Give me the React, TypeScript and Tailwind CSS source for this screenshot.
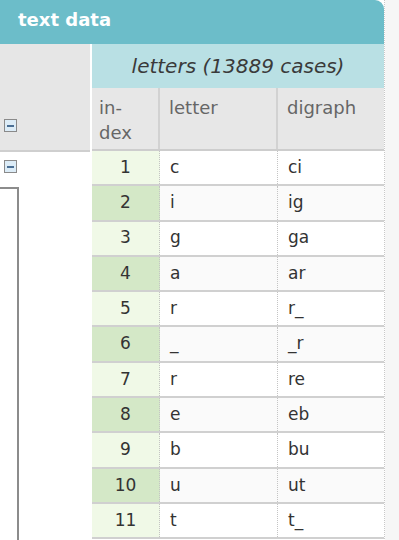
const ROWS: [number, string, string][] = [
  [1, "c", "ci"],
  [2, "i", "ig"],
  [3, "g", "ga"],
  [4, "a", "ar"],
  [5, "r", "r_"],
  [6, "_", "_r"],
  [7, "r", "re"],
  [8, "e", "eb"],
  [9, "b", "bu"],
  [10, "u", "ut"],
  [11, "t", "t_"],
];

function MinusBox() {
  return (
    <div className="flex h-[13px] w-[13px] items-center justify-center border border-[#8a8a8a] bg-[#dcecf7]">
      <div className="h-[2px] w-[7px] bg-[#4a6f95]" />
    </div>
  );
}

export default function App() {
  return (
    <div className="relative h-[540px] w-[399px] overflow-hidden bg-[#f6f6f6] font-['DejaVu_Sans',sans-serif] text-[#333]">
      <div className="w-[385px] border-r border-dotted border-[#c8c8c8] bg-white">
        <div className="flex h-[44px] items-center rounded-tr-[9px] bg-[#6cbdc9] pb-[6px] pl-[18px] text-[18px] font-bold text-white">
          text data
        </div>
        <div className="flex">
          <div className="w-[90px] shrink-0">
            <div className="flex h-[108px] items-end border-b-2 border-[#cfcfcf] bg-[#e6e6e6] pb-[18px] pl-[4px]">
              <MinusBox />
            </div>
            <div className="pl-[4px] pt-[8px]">
              <MinusBox />
            </div>
            <div className="mt-[14px] h-[400px] w-[19px] border-r-2 border-t-2 border-[#8c8c8c]" />
          </div>
          <div className="ml-[2px] flex-1">
            <div className="flex h-[44px] items-center justify-center bg-[#b9e0e4] text-[20px] italic text-[#3a3a3a]">
              letters (13889 cases)
            </div>
            <div className="grid h-[63px] grid-cols-[68px_118px_1fr] border-b-2 border-[#cdcdcd] bg-[#e7e7e7] text-[18px] leading-[25px] text-[#666]">
              <div className="border-r-2 border-[#d2d2d2] pl-[7px] pt-[7px]">
                in-
                <br />
                dex
              </div>
              <div className="border-r-2 border-[#d2d2d2] pl-[9px] pt-[7px]">letter</div>
              <div className="pl-[9px] pt-[7px]">digraph</div>
            </div>
            {ROWS.map(([n, l, d]) => (
              <div
                key={n}
                className="grid h-[35.3px] grid-cols-[68px_118px_1fr] border-b-2 border-[#d0d0d0] text-[17px]"
              >
                <div
                  className={`flex items-center justify-center border-r border-dotted border-[#c4c4c4] ${
                    n % 2 === 0 ? "bg-[#d4e8c7]" : "bg-[#f0f9e7]"
                  }`}
                >
                  {n}
                </div>
                <div
                  className={`flex items-center border-r border-dotted border-[#c4c4c4] pl-[10px] ${
                    n % 2 === 0 ? "bg-[#fafafa]" : "bg-white"
                  }`}
                >
                  {l}
                </div>
                <div className={`flex items-center pl-[10px] ${n % 2 === 0 ? "bg-[#fafafa]" : "bg-white"}`}>{d}</div>
              </div>
            ))}
          </div>
        </div>
      </div>
    </div>
  );
}
